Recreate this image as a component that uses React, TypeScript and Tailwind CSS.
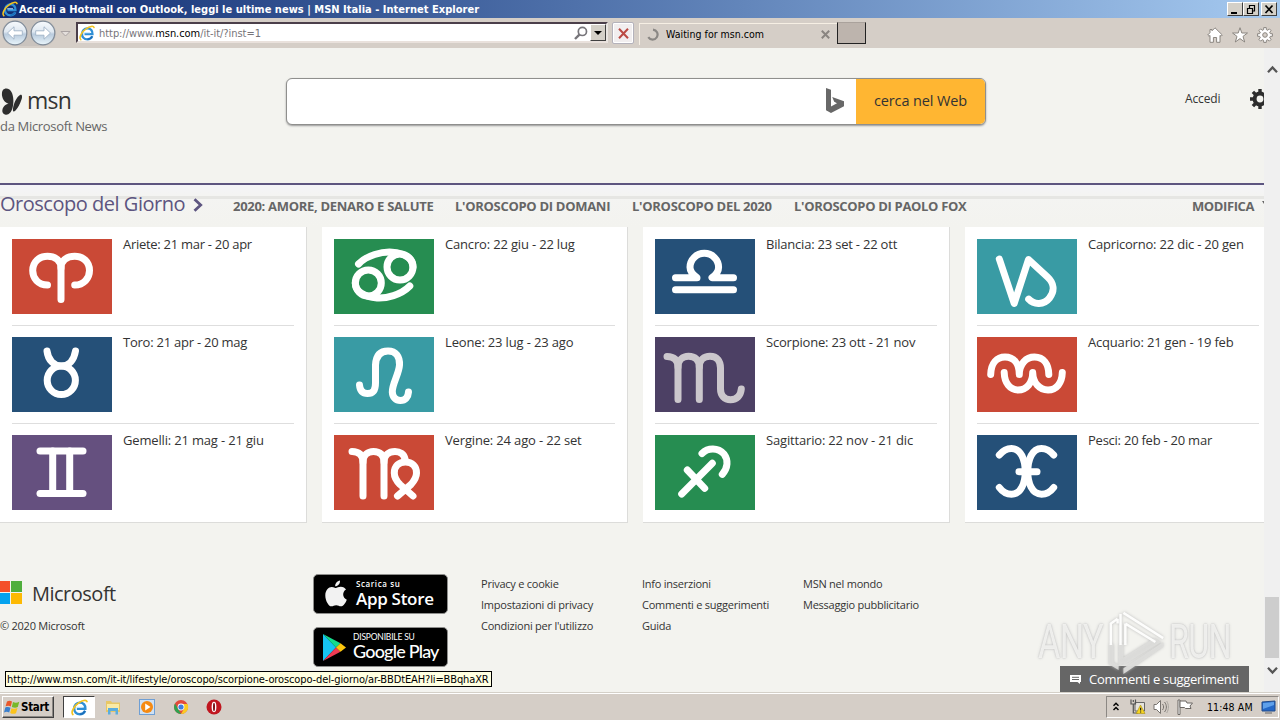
import React from "react";

const UI = "font-['DejaVu_Sans_Condensed','DejaVu_Sans',sans-serif] [font-stretch:condensed]";

type Sign = { label: string; bg: string; stroke?: string; paths: string[]; track: string };

const columns: Sign[][] = [
  [
    {
      label: "Ariete: 21 mar - 20 apr",
      bg: "bg-[#ca4936]",
      track: "tracking-[-0.28px]",
      paths: [
        "M35.5 46C26 46 20.7 39 20.7 31.5C20.7 23 27 17.2 35.5 17.2C43.5 17.2 49 22 49 29V60.5",
        "M62.7 46C72 46 77.5 39 77.5 31.5C77.5 23 71 17.2 62.7 17.2C54.5 17.2 49 22 49 29",
      ],
    },
    {
      label: "Toro: 21 apr - 20 mag",
      bg: "bg-[#255078]",
      track: "tracking-[-0.24px]",
      paths: [
        "M35 14C36 23 42 29 49.3 29C57 29 62 23 63.5 14",
        "M35.2 43.3a14.1 14.3 0 1 0 28.2 0a14.1 14.3 0 1 0 -28.2 0",
      ],
    },
    {
      label: "Gemelli: 21 mag - 21 giu",
      bg: "bg-[#65507f]",
      track: "tracking-[-0.17px]",
      paths: ["M28 16H71", "M28 58.5H71", "M40.7 16V58.5", "M57.7 16V58.5"],
    },
  ],
  [
    {
      label: "Cancro: 22 giu - 22 lug",
      bg: "bg-[#268d51]",
      track: "tracking-[-0.17px]",
      paths: [
        "M53 28a13 13 0 1 0 26 0a13 13 0 1 0 -26 0",
        "M21.3 44a13 13 0 1 0 26 0a13 13 0 1 0 -26 0",
        "M24.5 25C33 16 48 12.6 58 13.2C71 14 79 20 79 28",
        "M75.8 47C67 56 52 59.6 43 59C30 58 21.3 52 21.3 44",
      ],
    },
    {
      label: "Leone: 23 lug - 23 ago",
      bg: "bg-[#399ba4]",
      track: "tracking-[-0.16px]",
      paths: [
        "M25.5 48C26 54 29 56.5 33.5 56.5C40 56.5 41.5 52 41.5 46V28C42 19 46 14 54 14C62 14 66 19.5 65.5 28C65 37 58 47 58.3 55C58.6 60.5 62 63.5 66.3 63.5C71.5 63.5 74.2 60 74.5 55",
      ],
    },
    {
      label: "Vergine: 24 ago - 22 set",
      bg: "bg-[#ca4936]",
      track: "tracking-[-0.16px]",
      paths: [
        "M18 16.5C25 16.5 29 20 29 27V61",
        "M29 27C29 20 34 16.5 39.5 16.5C46 16.5 50 20 50 27V61",
        "M50 27C50 20 55 16.5 61 16.5C66 16.5 70 19 71 24",
        "M79 61L66 49.5C61.5 45 60.3 41.5 60.3 38C60.3 31 65 27 71.5 27C78 27 82.5 31.5 82.5 38C82.5 42.5 80.5 45.5 77 49.5L63.5 61",
      ],
    },
  ],
  [
    {
      label: "Bilancia: 23 set - 22 ott",
      bg: "bg-[#255078]",
      track: "tracking-[-0.21px]",
      paths: [
        "M20.5 38.7H42C37.5 35.5 35 32.5 35 28.3A14.3 14 0 0 1 63.6 28.3C63.6 32.5 61.5 35.5 57 38.7H78.5",
        "M20.5 50.7H78.5",
      ],
    },
    {
      label: "Scorpione: 23 ott - 21 nov",
      bg: "bg-[#4c4064]",
      stroke: "#cbc7cc",
      track: "tracking-[-0.2px]",
      paths: [
        "M12 19.5C19 19.5 23 23 23 30V62.5",
        "M23 30C23 23 28 19.3 33.5 19.3C40 19.3 44.3 23 44.3 30V62.5",
        "M44.3 30C44.3 23 49 19.3 55 19.3C62 19.3 65.5 24 65.5 31V52C65.5 58.5 69.5 62.7 75.5 62.7C82 62.7 85.7 58.5 86.3 52",
      ],
    },
    {
      label: "Sagittario: 22 nov - 21 dic",
      bg: "bg-[#268d51]",
      track: "tracking-[-0.17px]",
      paths: ["M26.7 59L57.3 28.3", "M32.3 35L49.7 53.3", "M47 18.5C53 12.5 63 12.5 69 19C73.5 25 73 33 67.3 39.3"],
    },
  ],
  [
    {
      label: "Capricorno: 22 dic - 20 gen",
      bg: "bg-[#399ba4]",
      track: "tracking-[-0.2px]",
      paths: ["M22.3 20L37.2 64.5L51.5 20.5L70.5 38C77 44 78 52 72.5 59C67 66 57 66 51.7 60.2"],
    },
    {
      label: "Acquario: 21 gen - 19 feb",
      bg: "bg-[#ca4936]",
      track: "tracking-[-0.19px]",
      paths: [
        "M13.7 37.5C14 26 20 20 28 20C37 20 42.3 27 42.3 37.5C42.3 27 49 20 57.5 20C66.5 20 71.7 27 71.8 37.5",
        "M27.2 35.5C27.5 46 33 53 41 53C49.5 53 55.7 46 55.7 35.5C56 46 62.5 53 71 53C79.5 53 85 46 85.3 35.5",
      ],
    },
    {
      label: "Pesci: 20 feb - 20 mar",
      bg: "bg-[#255078]",
      track: "tracking-[-0.24px]",
      paths: [
        "M22.3 20C26 15.5 30 13.5 34.5 13.5C44 13.5 48.2 25 48.2 36.7C48.2 48 44 59.3 34.5 59.3C30 59.3 26 57.5 22.3 52.5",
        "M76.7 20C73 15.5 69 13.5 64.5 13.5C55 13.5 50.8 25 50.8 36.7C50.8 48 55 59.3 64.5 59.3C69 59.3 73 57.5 76.7 52.5",
        "M42 36.7H60",
      ],
    },
  ],
];

const IeLogo = ({ className }: { className: string }) => (
  <svg className={className} viewBox="0 0 16 16" fill="none">
    <path d="M13.3 11.2C12.3 13.2 10.6 14.3 8.4 14.3C5 14.3 3 12 3 9C3 5.8 5.3 3.4 8.4 3.4C11.8 3.4 13.7 5.9 13.5 9.2H5.5" stroke="#2f8fd6" strokeWidth="2.3" />
    <path d="M13.3 11.2C12.3 13.2 10.6 14.3 8.4 14.3" stroke="#1b6cb8" strokeWidth="1.4" />
    <path d="M5.2 7.8H11" stroke="#bfe6ff" strokeWidth="1" />
    <path d="M1.8 14.6C-0.5 12.5 3 6.5 7.4 3.6C10.5 1.4 14.4 0.4 15 2.4" stroke="#f3c321" strokeWidth="1.6" strokeLinecap="round" />
  </svg>
);

const NavArrow = ({ flip }: { flip?: boolean }) => (
  <svg className={flip ? "size-[26px] -scale-x-100" : "size-[26px]"} viewBox="0 0 26 26">
    <defs>
      <linearGradient id={flip ? "navb" : "nava"} x1="0" y1="0" x2="0" y2="1">
        <stop offset="0" stopColor="#f7fafd" />
        <stop offset="0.45" stopColor="#dfe8f1" />
        <stop offset="0.55" stopColor="#b9cbdd" />
        <stop offset="1" stopColor="#e9f5fb" />
      </linearGradient>
    </defs>
    <circle cx="13" cy="13" r="11.8" fill={flip ? "url(#navb)" : "url(#nava)"} stroke="#7f8b99" strokeWidth="1.2" />
    <path d="M5.5 13L12 6.8V10.8H20.3V15.2H12V19.2Z" fill="#fff" stroke="#9fb2c6" strokeWidth="0.9" />
  </svg>
);

function TitleBar() {
  return (
    <div className="flex h-[18px] shrink-0 items-center bg-linear-to-r from-[#122c72] to-[#a6caf0] pr-[3px] pl-[2px]">
      <IeLogo className="size-4 shrink-0" />
      <span className={`${UI} ml-px flex-1 pt-[2px] text-[11px] font-bold whitespace-nowrap text-white`}>
        <span className="tracking-[0.02px]">Accedi a Hotmail con Outlook, leggi le ultime news | MSN Italia - Internet Explorer</span>
      </span>
      {["min", "restore", "close"].map((k) => (
        <div
          key={k}
          className={`${k === "close" ? "ml-[2px]" : ""} flex h-[14px] w-4 items-center justify-center border border-t-white border-r-[#404040] border-b-[#404040] border-l-white bg-[#d4d0c8]`}
        >
          <svg viewBox="0 0 12 11" className="h-[11px] w-3" fill="none" stroke="#000">
            {k === "min" && <path d="M2 9H8" strokeWidth="2" />}
            {k === "restore" && <path d="M4 1.5H10M4.5 1V4M9.5 1V7H8M2 4.5H8M2.5 4V9.5H7.5V4" strokeWidth="1.2" />}
            {k === "close" && <path d="M2.5 1.5L9.5 9M9.5 1.5L2.5 9" strokeWidth="1.7" />}
          </svg>
        </div>
      ))}
    </div>
  );
}

function ToolBar() {
  return (
    <div className={`${UI} flex h-[30px] shrink-0 items-start bg-[#d5cec7] pr-[7px] pl-[2px] text-[10.5px]`}>
      <div className="mt-[2px] flex items-center gap-[2px] rounded-l-full rounded-r-full bg-[#c1bcb7]/60">
        <NavArrow />
        <NavArrow flip />
      </div>
      <svg className="mt-[13px] ml-1 h-[6px] w-[11px]" viewBox="0 0 11 6">
        <path d="M1 .5H10L5.5 5Z" fill="#e4dfdc" stroke="#aaa3a3" />
      </svg>
      <div className="mt-1 ml-[5px] flex h-[21px] w-[532px] items-center border-2 border-t-[#4b3f4a] border-r-[#e9e5e1] border-b-[#e9e1dc] border-l-[#4b3f4a] bg-white pl-[1px]">
        <IeLogo className="size-4" />
        <span className="ml-[4px] flex-1 pt-[3px] text-[11px] tracking-[-0.05px] whitespace-nowrap text-[#77757a]">
          http://www.<span className="text-black">msn.com</span>/it-it/?inst=1
        </span>
        <svg className="mr-[2px] size-[14px]" viewBox="0 0 14 14" fill="none" stroke="#77757a">
          <circle cx="8.4" cy="5.4" r="4.1" strokeWidth="1.7" />
          <path d="M5.4 8.6L1 13" strokeWidth="2.4" />
        </svg>
        <div className="flex h-[17px] w-4 items-center justify-center border border-t-white border-r-[#404040] border-b-[#404040] border-l-white bg-[#d4d0c8]">
          <svg className="h-1 w-2" viewBox="0 0 8 4"><path d="M0 0H8L4 4Z" /></svg>
        </div>
      </div>
      <div className="mt-1 ml-[4px] flex size-[22px] items-center justify-center rounded-xs border border-[#b4b2bb] bg-[#f1eeef] shadow-[inset_0_0_0_1px_#fff]">
        <svg className="size-[11px]" viewBox="0 0 11 11" stroke="#bb4a44" strokeWidth="2"><path d="M1 .8L10 10.2M10 .8L1 10.2" /></svg>
      </div>
      <div className="mt-[5px] ml-[5px] flex h-[22px] w-[198px] items-center border-t border-l border-[#f6efe4] pl-[6px]">
        <svg className="size-[13px]" viewBox="0 0 13 13" fill="none" stroke="#8a8784" strokeWidth="2.2">
          <path d="M7 1.6A5 5 0 1 1 2.3 9.2" />
        </svg>
        <span className="ml-[7px] flex-1 tracking-[0.02px] whitespace-nowrap text-black">Waiting for msn.com</span>
        <svg className="mr-[7px] size-[9px]" viewBox="0 0 9 9" stroke="#8a8581" strokeWidth="2"><path d="M.8.8L8.2 8.2M8.2.8L.8 8.2" /></svg>
      </div>
      <div className="mt-1 h-[22px] w-[29px] border border-t-[#aaa29c] border-r-[#222] border-b-[#222] border-l-[#222] bg-[#bdb4ad]" />
      <div className="mt-[9px] ml-auto flex gap-[9px]">
        <svg className="size-4" viewBox="0 0 16 16" fill="#fff" stroke="#8b8680">
          <path d="M8 .8L15.3 8L14 9.3L13 8.4V15.3H9.6V10.5H6.4V15.3H3V8.4L2 9.3L.7 8L3 5.7V2.5H5V3.8Z" />
        </svg>
        <svg className="size-4" viewBox="0 0 16 16" fill="#fff" stroke="#8b8680">
          <path d="M8 .7L9.8 6H15.5L11 9.4L12.7 15L8 11.6L3.3 15L5 9.4L.5 6H6.2Z" />
        </svg>
        <svg className="size-4" viewBox="0 0 16 16" fill="#fff" stroke="#8b8680">
          <path d="M6.7 2.6V.6H9.3V2.6L10.9 3.3L12.3 1.8L14.2 3.7L12.7 5.1L13.4 6.7H15.4V9.3H13.4L12.7 10.9L14.2 12.3L12.3 14.2L10.9 12.7L9.3 13.4V15.4H6.7V13.4L5.1 12.7L3.7 14.2L1.8 12.3L3.3 10.9L2.6 9.3H.6V6.7H2.6L3.3 5.1L1.8 3.7L3.7 1.8L5.1 3.3Z" />
          <circle cx="8" cy="8" r="2.3" fill="#d5cec7" />
        </svg>
      </div>
    </div>
  );
}

function Header() {
  return (
    <header className="flex h-[135px] shrink-0 items-start text-[#333]">
      <div className="mt-[38px] w-[286px]">
        <div className="flex h-[30px] items-center">
          <svg className="-mt-px h-[28px] w-[22px]" viewBox="0 0 22 28" fill="#2e2e2e">
            <path d="M3 3C5 .5 10 1 12 6C14 11 13.5 17 12.5 21C11.5 25 8.5 28.5 5 27.5C2 26.5 1.5 23 3.5 20C5 17.8 7.5 17 8.5 16.5C5 16 2.5 12 2 8.5C1.8 6.5 2 4.3 3 3Z" />
            <path d="M20 8C22.2 7.2 22.5 9.5 21.5 12.5C20 17 18 21 15.5 23.5C13.5 25.5 12.6 24.5 13 21.5C13.5 17 16.5 10 20 8Z" />
          </svg>
          <span className="-mt-px ml-[5px] text-[23px] tracking-[-0.75px]">msn</span>
        </div>
        <div className="mt-[1px] h-[18px] text-[13px] leading-[18px] tracking-[-0.32px] text-[#666]">da Microsoft News</div>
      </div>
      <div className="mt-[30px] flex h-[47px] w-[700px] overflow-hidden rounded-md border border-[#8f8f8d] border-b-[#8f8f8d] bg-white shadow-[0_1px_2px_#999]">
        <div className="flex flex-1 items-center justify-end pr-[11px]">
          <svg className="-mt-[3px] h-[25px] w-5" viewBox="0 0 20 25" fill="#686868">
            <path d="M1 0L6 1.8V18.5L12 15.2L9.2 13.8L7.2 9L19 13.2V18.2L6 25L1 22.2Z" />
          </svg>
        </div>
        <div className="flex w-[129px] items-center justify-center bg-[#ffb632] pb-[2px] text-[14.5px] tracking-[-0.12px]">cerca nel Web</div>
      </div>
      <div className="mt-[42px] ml-[199px] h-[18px] text-[12px] leading-[18px] tracking-[-0.15px]">Accedi</div>
      <svg className="mt-[40px] ml-auto h-[22px] w-[15px] shrink-0" viewBox="0 0 15 22" fill="none" stroke="#2d2d2d">
        <circle cx="11" cy="11" r="5.4" strokeWidth="4" />
        <path d="M11 1V5M11 17V21M1 11H5M3.9 3.9L7 7M3.9 18.1L7 15" strokeWidth="3.4" />
      </svg>
    </header>
  );
}

function Heading() {
  return (
    <div className="h-[44px] shrink-0 border-t-2 border-[#5d5580] bg-linear-to-b from-[#f4f4f8] from-0% via-[#f4f4f2] via-25% to-[#f3f3ef]">
      <div className="h-[11px]" />
      <div className="flex h-[31px] items-start border-t-[3px] border-[#e6e6e3] whitespace-nowrap">
        <h2 className="-mt-[9px] h-7 w-[185px] text-[20px] leading-7 tracking-[-0.48px] text-[#5d5580]">Oroscopo del Giorno</h2>
        <svg className="mt-[-1px] ml-[8px] h-[14px] w-[10px]" viewBox="0 0 10 14" fill="none" stroke="#5d5580" strokeWidth="2.8"><path d="M1.5 1.2L7.7 7L1.5 12.8" /></svg>
        <div className="-mt-[2px] ml-[30px] flex flex-1 text-[13px] leading-[18px] font-bold text-[#666]">
          <span className="w-[222px] tracking-[-0.3px]">2020: AMORE, DENARO E SALUTE</span>
          <span className="w-[177px] tracking-[-0.3px]">L'OROSCOPO DI DOMANI</span>
          <span className="w-[162px] tracking-[-0.29px]">L'OROSCOPO DEL 2020</span>
          <span className="flex-1 tracking-[-0.32px]">L'OROSCOPO DI PAOLO FOX</span>
          <span className="w-[70px] tracking-[-0.4px]">MODIFICA</span>
          <svg className="mt-1 h-2 w-[2px]" viewBox="0 0 2 8"><path d="M0 0H2V3Z" fill="#666" /></svg>
        </div>
      </div>
    </div>
  );
}

function SignRow({ sign, last }: { sign: Sign; last: boolean }) {
  return (
    <div className={`flex items-start ${last ? "h-[75px]" : "h-[87px] border-b border-[#dedede]"}`}>
      <svg className={`h-[75px] w-[100px] shrink-0 ${sign.bg}`} viewBox="0 0 100 75" fill="none" stroke={sign.stroke ?? "#fff"} strokeWidth="7" strokeLinecap="round" strokeLinejoin="round">
        {sign.paths.map((d) => <path key={d} d={d} />)}
      </svg>
      <span className={`-mt-[4px] ml-[11px] text-[13px] leading-[18px] whitespace-nowrap text-[#333] ${sign.track}`}>{sign.label}</span>
    </div>
  );
}

function Cards() {
  return (
    <div className="flex h-[296px] w-[1290px] shrink-0 gap-[15px]">
      {columns.map((col, i) => (
        <div key={i} className={`${i === 1 ? "w-[306px] " : "w-[307px] "}flex shrink-0 flex-col gap-[11px] border-r border-b border-[#dcdcda] bg-white px-3 pt-3`}>
          {col.map((s, j) => <SignRow key={s.label} sign={s} last={j === 2} />)}
        </div>
      ))}
    </div>
  );
}

function Footer() {
  const lists = [
    { w: "w-[161px]", t: ["Privacy e cookie", "Impostazioni di privacy", "Condizioni per l'utilizzo"] },
    { w: "w-[161px]", t: ["Info inserzioni", "Commenti e suggerimenti", "Guida"] },
    { w: "w-[180px]", t: ["MSN nel mondo", "Messaggio pubblicitario"] },
  ];
  return (
    <footer className="flex flex-1 items-start text-[#333]">
      <div className="mt-[56px] w-[313px]">
        <div className="flex h-[28px] items-center">
          <div className="-mt-[2px] grid grid-cols-[10px_11px] grid-rows-[11px_11px] gap-px">
            <div className="bg-[#f4502a]" /><div className="bg-[#4fae3d]" /><div className="bg-[#05a2ee]" /><div className="bg-[#fdb903]" />
          </div>
          <span className="ml-[10px] pt-[2px] text-[20px] tracking-[-0.5px]">Microsoft</span>
        </div>
        <div className="mt-[10px] h-[18px] text-[11px] leading-[18px] tracking-[-0.25px]">© 2020 Microsoft</div>
      </div>
      <div className="mt-[51px] flex w-[168px] flex-col gap-[13px] text-white">
        <div className="flex h-10 w-[135px] items-center rounded-[5px] border border-[#8e8e8c] bg-black pl-[11px]">
          <svg className="-mt-[2px] h-[27px] w-[22px]" viewBox="0 0 22 27" fill="#f2f2f2">
            <path d="M15 .5C15.3 3.5 13 6.2 10.2 6.3C9.9 3.6 12.2.9 15 .5ZM10.8 8C12 8 13.5 6.8 15.8 6.8C18.2 6.9 20 8 21 9.6C16.8 12.2 17.5 18 21.8 19.7C20.8 22.5 18.5 26.3 16 26.3C14 26.3 13.4 25.2 11.2 25.2C9 25.2 8.3 26.3 6.4 26.3C3.5 26.3.3 20.5.3 15.4C.3 10 3.6 6.9 6.8 6.9C8.8 6.9 10 8 10.8 8Z" />
          </svg>
          <div className="ml-[9px] flex flex-col whitespace-nowrap">
            <span className="h-[10px] text-[8px] leading-[10px] font-semibold tracking-[0.6px]">Scarica su</span>
            <span className="h-[21px] text-[17px] leading-[20px] font-semibold tracking-[-0.3px]">App Store</span>
          </div>
        </div>
        <div className="flex h-10 w-[135px] items-center rounded-[5px] border border-[#8e8e8c] bg-black pl-[9px]">
          <svg className="h-[27px] w-[23px]" viewBox="0 0 23 27">
            <path d="M0 0L13 13.5L0 27Z" fill="#16c4f3" />
            <path d="M0 0L17.5 9.3L13 13.5Z" fill="#15dc8c" />
            <path d="M0 27L17.5 17.7L13 13.5Z" fill="#ee3b54" />
            <path d="M17.5 9.3L23 13.5L17.5 17.7L13 13.5Z" fill="#fcc60d" />
          </svg>
          <div className="ml-[7px] flex flex-col whitespace-nowrap">
            <span className="h-[10px] font-[Lato,sans-serif] text-[8.5px] leading-[10px] tracking-[-0.2px]">DISPONIBILE SU</span>
            <span className="h-[21px] font-[Lato,sans-serif] text-[18px] leading-[18px] font-medium tracking-[-0.8px]">Google Play</span>
          </div>
        </div>
      </div>
      {lists.map((l) => (
        <div key={l.t[0]} className={`${l.w} mt-[50px] text-[11px] leading-[21px] tracking-[-0.24px] whitespace-nowrap`}>
          {l.t.map((x) => <div key={x}>{x}</div>)}
        </div>
      ))}
    </footer>
  );
}

function ScrollBar() {
  return (
    <div className="flex w-4 shrink-0 flex-col items-center bg-[#f0f0f0] pt-[17px] pb-[17px]">
      <svg className="h-[9px] w-[11px]" viewBox="0 0 11 9" fill="none" stroke="#555" strokeWidth="2.3"><path d="M1 7.2L5.5 2.4L10 7.2" /></svg>
      <div className="mt-auto h-[61px] w-[14px] bg-[#cdcdcd]" />
      <svg className="mt-[8px] h-[9px] w-[11px]" viewBox="0 0 11 9" fill="none" stroke="#555" strokeWidth="2.3"><path d="M1 1.8L5.5 6.6L10 1.8" /></svg>
    </div>
  );
}

function Watermark() {
  return (
    <div className="absolute top-[560px] left-[1038px] flex h-[66px] w-[196px] items-center font-[Roboto,sans-serif] text-[49px] leading-none font-normal text-[#fafaf8]/80 [text-shadow:0_0_2px_#bbb,0_0_4px_#d0d0d0]">
      <span className="w-[69px] origin-left scale-x-[0.7] tracking-[-1px]">ANY</span>
      <svg className="mt-[2px] h-[64px] w-[60px] shrink-0 drop-shadow-[0_0_1.5px_#bbb]" viewBox="0 0 60 66" fill="none">
        <path d="M1 35H6V54L11 57V62L1 56ZM11 35H16V49L26 43V49L11 58ZM16 49L48 29L55 33L16 57ZM16 66V60L51 37L57 33V38Z" fill="#dededb" opacity=".9" />
        <path d="M10 9L3 14V36M16 3L57 29M13 4V36M18 14L49 33M18 14V36M10 9V14" stroke="#fdfdfc" strokeWidth="2.6" />
      </svg>
      <span className="ml-[2px] origin-left scale-x-[0.66] tracking-[-1px]">RUN</span>
    </div>
  );
}

function TaskBar() {
  return (
    <div className={`${UI} flex h-7 shrink-0 items-center border-t border-[#d4d0c8] bg-[#d5cec7] shadow-[inset_0_1px_0_#fff] pr-px pl-[2px]`}>
      <div className="mt-px flex h-[22px] w-[52px] items-center border border-t-white border-r-[#404040] border-b-[#404040] border-l-white pl-px shadow-[inset_-1px_-1px_0_#8c8884]">
        <svg className="size-4 shrink-0" viewBox="0 0 16 16">
          <path d="M3 2.5C5 1.5 6.5 1.7 8 2.5L6.8 7.5C5.2 6.6 3.5 6.6 1.6 7.3Z" fill="#e9572b" />
          <path d="M9 3C10.8 4 13 4 15.3 2.8L13.8 8C12 9 9.8 8.8 7.8 8Z" fill="#77b82a" />
          <path d="M1.3 8.5C3.3 7.7 5 7.9 6.5 8.7L5.2 13.5C3.5 12.6 2 12.6 0 13.4Z" fill="#3a7fcd" />
          <path d="M7.5 9.2C9.5 10.2 11.5 10 13.5 9.1L12 14.2C10 15.2 8 15 6.2 14Z" fill="#fbc31c" />
        </svg>
        <span className="ml-px pt-[2px] text-[11.5px] font-bold tracking-[-0.3px] text-black">Start</span>
      </div>
      <div className="mt-px ml-[9px] flex h-[22px] w-[32px] items-center justify-center border border-t-[#404040] border-r-white border-b-white border-l-[#404040] bg-white">
        <IeLogo className="size-[17px]" />
      </div>
      <svg className="ml-[10px] size-4" viewBox="0 0 16 16">
        <path d="M1 2H6L7 3.5H15V13H1Z" fill="#e8c766" />
        <path d="M2 5H14V11H2Z" fill="#faeaa5" />
        <path d="M3 9H13V15.5H10.5V12H5.5V15.5H3Z" fill="#5badde" />
      </svg>
      <div className="ml-[18px] flex size-4 items-center justify-center border border-[#6f9fd4] bg-[#cfe1f4]">
        <svg className="size-[14px]" viewBox="0 0 14 14"><circle cx="7" cy="7" r="6" fill="#f58a13" /><path d="M5.2 3.5L10.5 7L5.2 10.5Z" fill="#fff" /></svg>
      </div>
      <svg className="ml-[18px] size-4" viewBox="0 0 16 16">
        <circle cx="8" cy="8" r="7" fill="#e24a3b" />
        <path d="M2 4.5L5.5 10.5L8 15A7 7 0 0 1 2 4.5Z" fill="#2fa150" />
        <path d="M8 15A7 7 0 0 0 14.5 5H8L11 9.7Z" fill="#fbcb23" />
        <circle cx="8" cy="8" r="3.4" fill="#fff" /><circle cx="8" cy="8" r="2.6" fill="#3f7de0" />
      </svg>
      <svg className="ml-[17px] size-4" viewBox="0 0 16 16">
        <circle cx="8" cy="8" r="7.5" fill="#c0161f" /><ellipse cx="8" cy="8" rx="2.4" ry="5.2" fill="#fff" /><ellipse cx="8" cy="8" rx="1" ry="4.2" fill="#7c1016" />
      </svg>
      <div className="mt-px ml-auto flex h-[22px] w-[173px] shrink-0 items-center border border-t-[#8c8884] border-r-white border-b-white border-l-[#8c8884] pr-[2px] pl-[6px]">
        <svg className="-mt-[2px] h-[9px] w-[6px]" viewBox="0 0 6 9" fill="none" stroke="#000" strokeWidth="1.4"><path d="M.5 3.8L3 1.2L5.5 3.8M.5 8L3 5.4L5.5 8" /></svg>
        <svg className="ml-[11px] size-4" viewBox="0 0 16 16">
          <path d="M5 3.5H14.5V12H5Z" fill="#e6e3dc" stroke="#666" />
          <path d="M1 .5V5H5.5V.5M3.3 5V14H8M3.3 1V3" fill="none" stroke="#555" strokeWidth="1.2" />
          <path d="M10.5 6L15 14.5H6.2Z" fill="#f6d420" stroke="#a98f10" strokeWidth=".6" /><path d="M10.6 8.8V11.5M10.6 12.4V13.6" stroke="#222" strokeWidth="1.2" />
        </svg>
        <svg className="ml-[7px] size-4" viewBox="0 0 16 16" fill="none" stroke="#77736f">
          <path d="M1 5.5H3.5L7.5 1.5V14.5L3.5 10.5H1Z" fill="#fff" /><path d="M9.5 5C11 7 11 9 9.5 11M11.5 3C14 6 14 10 11.5 13" /><path d="M13.7 2C16 6 16 10 13.7 14" stroke="#aaa6a0" />
        </svg>
        <svg className="ml-[8px] h-4 w-[17px]" viewBox="0 0 17 16" fill="#fff" stroke="#6b6763"><path d="M1 1H3V15.5H1Z" /><path d="M3 2H9L10 4H15.5L13 7L14 9.5H8.5L7.5 8.5H3Z" /></svg>
        <span className="ml-[13px] flex-1 pt-[2px] text-[10.5px] tracking-[0.1px] whitespace-nowrap text-black">11:48 AM</span>
        <svg className="h-[15px] w-[15px]" viewBox="0 0 15 15"><path d="M1 2L14 1V11H1Z" fill="#2468c8" stroke="#234b88" /><path d="M2 3L13 2V5L2 9Z" fill="#5fa0ea" /><path d="M4 13H11" stroke="#666" /></svg>
      </div>
    </div>
  );
}

export default function App() {
  return (
    <div className="flex h-[720px] w-[1280px] flex-col overflow-hidden bg-[#f3f3ef] font-['Open_Sans','Noto_Sans',sans-serif]">
      <TitleBar />
      <ToolBar />
      <div className="relative flex h-[644px] shrink-0">
        <div className="flex w-[1264px] flex-col overflow-hidden">
          <Header />
          <Heading />
          <Cards />
          <Footer />
        </div>
        <ScrollBar />
        <div className="absolute top-[618px] left-[1060px] flex h-[26px] w-[189px] items-center bg-[#666] pl-[10px] text-white">
          <svg className="h-[9px] w-[11px]" viewBox="0 0 11 9"><path d="M0 0H11V7H10V9L7.5 7H0Z" fill="#fff" /><path d="M2 2.3H9M2 4.5H9" stroke="#666" /></svg>
          <span className="ml-[8px] pt-px text-[13px] tracking-[-0.3px] whitespace-nowrap">Commenti e suggerimenti</span>
        </div>
        <Watermark />
        <div className={`${UI} absolute top-[623px] left-[5px] flex h-4 w-[487px] items-center border border-black bg-[#ffffe1] pt-[2px] pl-px text-[11px] tracking-[-0.12px] whitespace-nowrap text-black`}>
          http://www.msn.com/it-it/lifestyle/oroscopo/scorpione-oroscopo-del-giorno/ar-BBDtEAH?li=BBqhaXR
        </div>
      </div>
      <TaskBar />
    </div>
  );
}
